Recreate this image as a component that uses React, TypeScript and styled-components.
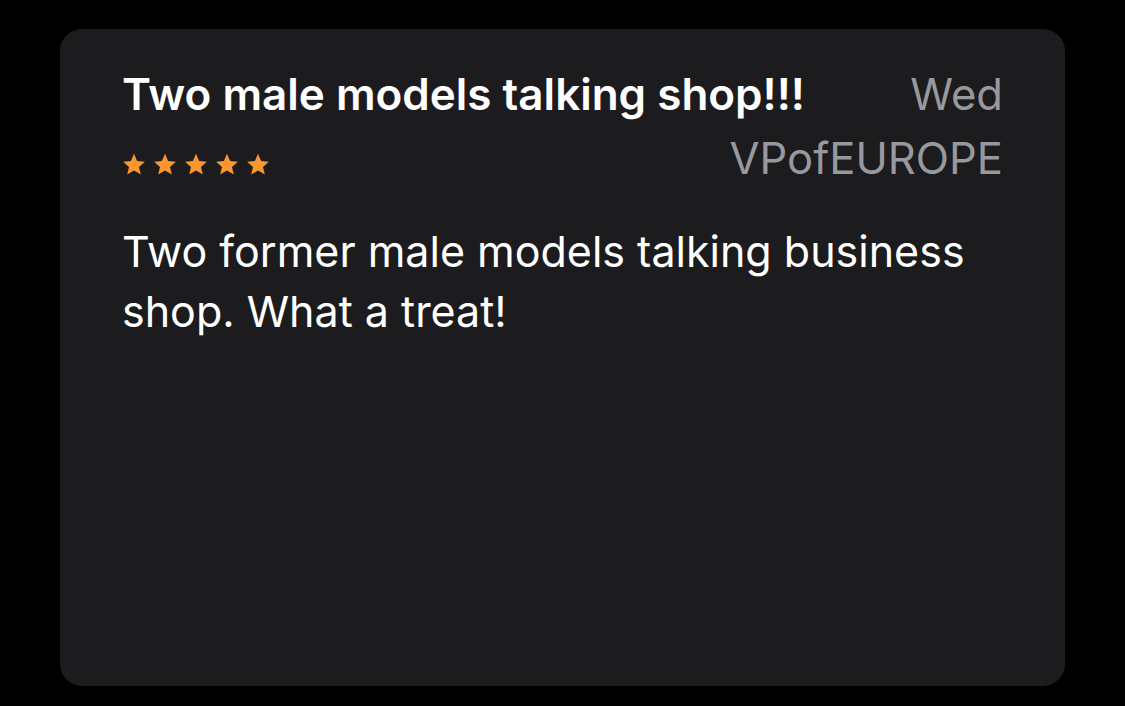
import React from "react";
import styled, { createGlobalStyle } from "styled-components";

const GlobalStyle = createGlobalStyle`
  html, body {
    margin: 0;
    padding: 0;
    background: #000;
  }
  body {
    font-family: Inter, "Noto Sans", "Liberation Sans", sans-serif;
    -webkit-font-smoothing: antialiased;
  }
`;

const Page = styled.div`
  width: 1125px;
  height: 706px;
  box-sizing: border-box;
  padding: 29px 60px 20px 60px;
  background: #000;
`;

const Card = styled.article`
  box-sizing: border-box;
  width: 1005px;
  height: 657px;
  background: #1c1c1e;
  border-radius: 22px;
  padding: 39px 62px 0 62px;
  display: flex;
  flex-direction: column;
`;

const Header = styled.header`
  display: flex;
  flex-direction: column;
  gap: 12px;
`;

const Row = styled.div`
  display: flex;
  justify-content: space-between;
  align-items: flex-start;
`;

const Title = styled.h2`
  margin: 0;
  font-size: 44px;
  line-height: 52px;
  font-weight: 600;
  color: #ffffff;
  letter-spacing: 0;
  white-space: nowrap;
`;

const Stars = styled.div`
  display: flex;
  gap: 7px;
  margin-top: 21px;
  height: 23px;
  align-items: center;
`;

const Meta = styled.span`
  font-size: 43.5px;
  line-height: 52px;
  font-weight: 400;
  color: #98989f;
  white-space: nowrap;
`;

const Body = styled.p`
  margin: 37px 0 0 0;
  font-size: 43px;
  line-height: 60px;
  font-weight: 400;
  color: #ffffff;
`;

const Star = () => (
  <svg width="24" height="23" viewBox="0 0 24 23" aria-hidden="true">
    <path
      d="M12 0.8l3.1 7.2 7.8.7-5.9 5.2 1.8 7.7L12 17.5l-6.8 4.1 1.8-7.7-5.9-5.2 7.8-.7z"
      fill="#fa962f"
    />
  </svg>
);

export default function App() {
  return (
    <>
      <GlobalStyle />
      <Page>
        <Card>
          <Header>
            <Row>
              <Title>Two male models talking shop!!!</Title>
              <Meta>Wed</Meta>
            </Row>
            <Row>
              <Stars>
                {[0, 1, 2, 3, 4].map((i) => (
                  <Star key={i} />
                ))}
              </Stars>
              <Meta>VPofEUROPE</Meta>
            </Row>
          </Header>
          <Body>
            Two former male models talking business
            <br />
            shop. What a treat!
          </Body>
        </Card>
      </Page>
    </>
  );
}
